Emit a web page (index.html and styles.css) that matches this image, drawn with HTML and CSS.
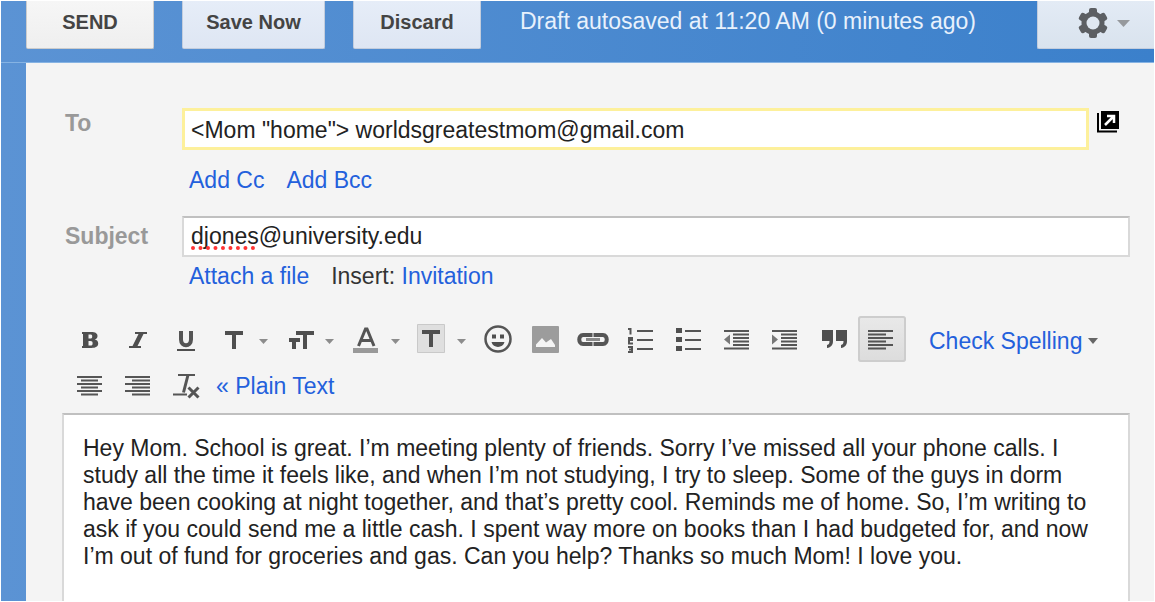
FILE: index.html
```
<!DOCTYPE html>
<html lang="en">

<head>
    <meta charset="UTF-8">
    <meta name="viewport" content="width=device-width, initial-scale=1.0">
    <title>Compose Mail</title>
    <link rel="stylesheet" href="styles.css">
</head>

<body>
    <div class="page">
        <header class="topbar">
            <button type="button" class="btn send">SEND</button>
            <button type="button" class="btn save">Save Now</button>
            <button type="button" class="btn">Discard</button>
            <span class="status">Draft autosaved at 11:20 AM (0 minutes ago)</span>
            <button type="button" class="btn settings" aria-label="Settings">
                <svg width="54" height="32" viewBox="0 0 54 32">
                    <g fill="#5c5f63">
                        <rect x="12" y="1" width="8" height="30" rx="2" />
                        <rect x="12" y="1" width="8" height="30" rx="2" transform="rotate(60 16 16)" />
                        <rect x="12" y="1" width="8" height="30" rx="2" transform="rotate(120 16 16)" />
                        <circle cx="16" cy="16" r="11.500" />
                    </g>
                    <circle cx="16" cy="16" r="6.500" fill="#dfe7f1" />
                    <path d="M40 13h13l-6.500 7z" fill="#96999d" />
                </svg>
            </button>
        </header>

        <main class="compose">
            <form class="fields">
                <label for="to">To</label>
                <div class="field to-row">
                    <input type="text" id="to" class="to" value='&lt;Mom "home"&gt; worldsgreatestmom@gmail.com'>
                    <button type="button" class="popout" aria-label="Open in new window">
                        <svg width="22" height="22" viewBox="0 0 22 22">
                            <path d="M4 0h18v18H4z" />
                            <path d="M1 2v18.500h19" fill="none" stroke="#000" stroke-width="2" />
                            <path d="M8 14L16 6M10 5h7v7" fill="none" stroke="#fff" stroke-width="2.500" />
                        </svg>
                    </button>
                </div>
                <div class="links to-links">
                    <a href="#">Add Cc</a>
                    <a href="#">Add Bcc</a>
                </div>

                <label for="subject">Subject</label>
                <div class="field">
                    <input type="text" id="subject" class="subject" value="djones@university.edu" spellcheck="false">
                    <span class="misspelled"></span>
                </div>
                <div class="links">
                    <a href="#">Attach a file</a>
                    <span>Insert: <a href="#">Invitation</a></span>
                </div>
            </form>

            <div class="toolbar">
                <button type="button" class="tool" aria-label="Bold">
                    <svg width="48" height="46" viewBox="0 0 48 46">
                        <path fill-rule="evenodd" d="M16 16h9c4.500 0 6.500 1.500 6.500 4 0 1.800-1 3-2.800 3.600 2.200.5 3.500 1.800 3.500 4 0 3-2.500 4.400-6.700 4.400H16v-2h1V18h-1zM22.500 18.500v4h1.500c1.800 0 2.200-.6 2.200-2s-.4-2-2.200-2zM22.500 25v4.500h1.700c2 0 2.400-.8 2.400-2.300S26.200 25 24.200 25z" />
                    </svg>
                </button>
                <button type="button" class="tool" aria-label="Italic">
                    <svg width="48" height="46" viewBox="0 0 48 46">
                        <path d="M21 16h12v2h-3.500l-6 12H27v2H15v-2h3.500l6-12H21z" />
                    </svg>
                </button>
                <button type="button" class="tool" aria-label="Underline">
                    <svg width="48" height="46" viewBox="0 0 48 46">
                        <path class="line" stroke-width="4" d="M19 15v8.500c0 7.500 10 7.500 10 0V15" />
                        <path d="M15 33h18v2H15z" />
                    </svg>
                </button>
                <button type="button" class="tool menu" aria-label="Font">
                    <svg width="66" height="46" viewBox="0 0 66 46">
                        <path d="M15 15h18v4h-7v14h-4V19h-7z" />
                        <path class="arrow" d="M49 23h9l-4.500 5z" />
                    </svg>
                </button>
                <button type="button" class="tool menu" aria-label="Size">
                    <svg width="66" height="46" viewBox="0 0 66 46">
                        <path d="M20 15h18v4h-7v14h-4V19h-7zM13 22h11v4h-4v7h-4v-7h-3z" />
                        <path class="arrow" d="M49 23h9l-4.500 5z" />
                    </svg>
                </button>
                <button type="button" class="tool menu" aria-label="Text color">
                    <svg width="66" height="46" viewBox="0 0 66 46">
                        <path class="line" stroke-width="3" d="M16.500 30L23.500 13h1.500l7 17M19 24.500h11" />
                        <path fill="#999" d="M11 32h25v5H11z" />
                        <path class="arrow" d="M49 23h9l-4.500 5z" />
                    </svg>
                </button>
                <button type="button" class="tool menu" aria-label="Highlight color">
                    <svg width="66" height="46" viewBox="0 0 66 46">
                        <path fill="#dfdfdf" stroke="#c9c9c9" d="M9.500 8.500h27v28h-27z" />
                        <path d="M14 14h18v4h-7v13h-4V18h-7z" />
                        <path class="arrow" d="M49 23h9l-4.500 5z" />
                    </svg>
                </button>
                <button type="button" class="tool" aria-label="Insert emoticon">
                    <svg width="48" height="46" viewBox="0 0 48 46">
                        <circle class="line" stroke-width="2.500" cx="24" cy="23" r="12.500" />
                        <path d="M18 18.500h4v4h-4zM26 18.500h4v4h-4zM17.500 26h13c-1.500 6.500-11.500 6.500-13 0z" />
                    </svg>
                </button>
                <button type="button" class="tool" aria-label="Insert image">
                    <svg width="48" height="46" viewBox="0 0 48 46">
                        <rect x="10" y="10" width="27" height="27" rx="1" fill="#9c9c9c" />
                        <path fill="#f4f4f4" d="M14 31v-2.500l6-6.500 4 4.500 5-3.500 4 6v2z" />
                    </svg>
                </button>
                <button type="button" class="tool" aria-label="Link">
                    <svg width="48" height="46" viewBox="0 0 48 46">
                        <path class="line" stroke-width="4" d="M20.500 21v-2H13c-5 0-5 9 0 9h7.500v-2M25.500 21v-2H33c5 0 5 9 0 9h-7.500v-2" />
                        <path stroke="#888" stroke-width="3" d="M16 23.500h14" />
                    </svg>
                </button>
                <button type="button" class="tool" aria-label="Numbered list">
                    <svg width="48" height="46" viewBox="0 0 48 46">
                        <path class="line" stroke-width="2" d="M19 15h16M19 24h16M19 33h16M10 13h2.500v5.500M10 22h4v2h-3v3.500h4M10 31h4v5h-4M11 33.500h3" />
                    </svg>
                </button>
                <button type="button" class="tool" aria-label="Bulleted list">
                    <svg width="48" height="46" viewBox="0 0 48 46">
                        <path class="line" stroke-width="2" d="M19 15h16M19 24h16M19 33h16" />
                        <path d="M10 12h6v5h-6zM10 21h6v5h-6zM10 30h6v5h-6z" />
                    </svg>
                </button>
                <button type="button" class="tool" aria-label="Indent less">
                    <svg width="48" height="46" viewBox="0 0 48 46">
                        <path class="line" stroke-width="2" d="M10 15h25M19 18.500h16M19 22h16M19 25.500h16M19 29h16M10 32.500h25" />
                        <path fill="#777" d="M16 18.500v10L10 23.500z" />
                    </svg>
                </button>
                <button type="button" class="tool" aria-label="Indent more">
                    <svg width="48" height="46" viewBox="0 0 48 46">
                        <path class="line" stroke-width="2" d="M10 15h25M19 18.500h16M19 22h16M19 25.500h16M19 29h16M10 32.500h25" />
                        <path fill="#777" d="M10 18.500v10l6-5z" />
                    </svg>
                </button>
                <button type="button" class="tool" aria-label="Quote">
                    <svg width="48" height="46" viewBox="0 0 48 46">
                        <path d="M12 14h11v11c0 4-2 6.500-6 7v-3c2-.5 2.500-1.500 2.500-4H12zM26 14h11v11c0 4-2 6.500-6 7v-3c2-.5 2.500-1.500 2.500-4H26z" />
                    </svg>
                </button>
                <button type="button" class="tool active" aria-label="Align left">
                    <svg width="48" height="46" viewBox="0 0 48 46">
                        <path class="line" stroke-width="2" d="M10 15h25M10 18.500h18M10 22h25M10 25.500h18M10 29h25M10 32.500h18" />
                    </svg>
                </button>
                <a href="#" class="spelling">Check Spelling
                    <svg width="10" height="6" viewBox="0 0 10 6">
                        <path fill="#666" d="M0 0h10L5 6z" />
                    </svg>
                </a>
                <button type="button" class="tool" aria-label="Align center">
                    <svg width="48" height="46" viewBox="0 0 48 46">
                        <path class="line" stroke-width="2" d="M11 15h25M15 18.500h17M11 22h25M15 25.500h17M11 29h25M15 32.500h17" />
                    </svg>
                </button>
                <button type="button" class="tool" aria-label="Align right">
                    <svg width="48" height="46" viewBox="0 0 48 46">
                        <path class="line" stroke-width="2" d="M11 15h25M18 18.500h18M11 22h25M18 25.500h18M11 29h25M18 32.500h18" />
                    </svg>
                </button>
                <button type="button" class="tool" aria-label="Remove formatting">
                    <svg width="48" height="46" viewBox="0 0 48 46">
                        <path class="line" stroke-width="2" d="M16 13h17M11 32.500h14" />
                        <path class="line" stroke-width="3" d="M26 13l-4.500 17.500M26.500 25.500l10 10M36.500 25.500l-10 10" />
                    </svg>
                </button>
                <a href="#" class="plain">« Plain Text</a>
            </div>

            <textarea class="message" aria-label="Message body" spellcheck="false">Hey Mom. School is great. I’m meeting plenty of friends. Sorry I’ve missed all your phone calls. I study all the time it feels like, and when I’m not studying, I try to sleep. Some of the guys in dorm have been cooking at night together, and that’s pretty cool. Reminds me of home. So, I’m writing to ask if you could send me a little cash. I spent way more on books than I had budgeted for, and now I’m out of fund for groceries and gas. Can you help? Thanks so much Mom! I love you.</textarea>
        </main>
    </div>
</body>

</html>
```
FILE: styles.css
```
* {
    box-sizing: border-box;
}

body {
    margin: 0;
    background-color: #fff;
    font-family: "Liberation Sans", Arial, sans-serif;
    font-size: 23px;
    line-height: 27px;
    color: #333;
}

button,
input,
textarea {
    font: inherit;
    margin: 0;
}

a {
    color: #2360dc;
    text-decoration: none;
}

.page {
    display: flex;
    flex-direction: column;
    min-height: 100vh;
    border: 1px solid #fff;
    background: linear-gradient(90deg, #5b93d4, #3b80cb);
}

/* top bar */
.topbar {
    display: flex;
    align-items: flex-start;
    gap: 28px;
    height: 62px;
    padding-left: 25px;
    border-bottom: 1px solid #86b3e3;
}

.btn {
    width: 128px;
    height: 48px;
    padding: 0 0 4px;
    border: 1px solid #c3cddd;
    border-top: 0;
    border-radius: 0 0 2px 2px;
    background: linear-gradient(#e6edf8, #dee6f3);
    font-size: 20px;
    font-weight: bold;
    color: #444;
}

.btn.send {
    border-color: #ccc;
    background: linear-gradient(#f6f6f6, #efefef);
}

.btn.save {
    width: 143px;
}

.btn.settings {
    width: 117px;
    margin-left: auto;
    padding: 0 0 4px 16px;
    border-right: 0;
    border-radius: 0 0 0 2px;
    background: linear-gradient(#e3ebf5, #d9e3ee);
}

.settings svg {
    display: block;
    margin: 0 auto;
}

.status {
    margin-left: 11px;
    padding-top: 7px;
    white-space: nowrap;
    color: #e8f1fc;
}

/* compose form */
.compose {
    flex: 1;
    display: flex;
    flex-direction: column;
    margin-left: 25px;
    padding: 45px 24px 0 36px;
    background-color: #f4f4f4;
}

.fields {
    display: grid;
    grid-template-columns: 120px 1fr;
}

.fields label {
    padding: 2px 3px;
    font-weight: bold;
    color: #999;
}

.fields label[for="subject"] {
    padding-top: 7px;
}

.field {
    position: relative;
}

.field input {
    width: 100%;
    min-width: 0;
    outline: 0;
    color: #222;
}

.to-row {
    display: flex;
    align-items: flex-start;
    gap: 8px;
    padding-right: 11px;
}

.field .to {
    height: 42px;
    padding: 2px 6px 0;
    border: 3px solid #fdf09b;
}

.field .subject {
    display: block;
    height: 41px;
    padding: 0 7px;
    border: 2px solid #d9d9d9;
    border-top-color: #c0c0c0;
}

.popout {
    flex: none;
    margin-top: 3px;
    padding: 0;
    border: 0;
    background: none;
}

.popout svg {
    display: block;
}

/* squiggle under the unknown word */
.misspelled {
    position: absolute;
    left: 9px;
    bottom: 7px;
    width: 64px;
    border-bottom: 4px dotted #f33;
}

.links {
    grid-column: 2;
    display: flex;
    gap: 22px;
    padding: 6px 7px 0;
}

.to-links {
    padding: 17px 7px 22px;
}

/* formatting toolbar */
.toolbar {
    display: flex;
    flex-wrap: wrap;
    align-items: center;
    margin: 26px 0 5px;
    padding-left: 4px;
}

.tool {
    width: 48px;
    height: 46px;
    padding: 0;
    border: 0;
    background: none;
}

.tool.menu {
    width: 66px;
}

.tool svg {
    display: block;
    fill: #4f4f4f;
}

.tool .line {
    fill: none;
    stroke: #555;
}

.tool .arrow {
    fill: #8c8c8c;
}

.tool.active {
    border-radius: 3px;
    background: linear-gradient(#e9e9e9, #dcdcdc);
    box-shadow: inset 0 0 0 2px #cdcdcd;
}

.spelling {
    display: flex;
    align-items: center;
    gap: 6px;
    padding: 4px 0 0 23px;
    white-space: nowrap;
}

.plain {
    padding: 2px 0 0 6px;
}

.message {
    flex: 1;
    width: 100%;
    min-height: 188px;
    padding: 20px 19px;
    border: 2px solid #d9d9d9;
    border-top-color: #c0c0c0;
    border-width: 2px 2px 0;
    outline: 0;
    resize: none;
    overflow: hidden;
    background-color: #fff;
    color: #222;
}
```
